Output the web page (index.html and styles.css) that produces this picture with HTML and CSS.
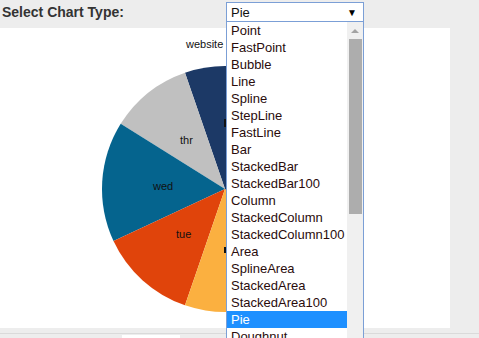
FILE: index.html
```html
<!DOCTYPE html>
<html lang="en">
<head>
  <meta charset="UTF-8">
  <title>Chart Types</title>
  <link rel="stylesheet" href="styles.css">
</head>
<body>
  <!-- TOOLBAR -->
  <div class="toolbar">
    <label class="toolbar-label">Select Chart Type:</label>
    <div class="select-box">
      <span>Pie</span>
      <span class="select-arrow">&#9660;</span>
    </div>
  </div>

  <!-- CHART -->
  <div class="chart-area">
    <svg class="pie" width="450" height="300" viewBox="0 0 450 300">
      <path d="M225,161 L225,38 A123,123 0 0 0 185,44.7 Z" fill="#1c3966"/>
      <path d="M225,161 L185,44.7 A123,123 0 0 0 120.7,95.8 Z" fill="#c0c0c0"/>
      <path d="M225,161 L120.7,95.8 A123,123 0 0 0 113.5,213 Z" fill="#05648e"/>
      <path d="M225,161 L113.5,213 A123,123 0 0 0 185,277.3 Z" fill="#e0440b"/>
      <path d="M225,161 L185,277.3 A123,123 0 0 0 331.5,222.5 Z" fill="#fbb040"/>
      <path d="M225,161 L331.5,222.5 A123,123 0 0 0 225,38 Z" fill="#1c3966"/>
      <g class="pie-label">
        <text x="186" y="20">website</text>
        <text x="180" y="116">thr</text>
        <text x="153" y="162">wed</text>
        <text x="176" y="210">tue</text>
      </g>
      <!-- labels mostly hidden under the open list -->
      <rect x="224" y="91" width="2" height="8" fill="#111"/>
      <rect x="224" y="219" width="2" height="6" fill="#111"/>
    </svg>
  </div>

  <!-- FOOTER -->
  <div class="footer">
    <div class="footer-tab"></div>
  </div>

  <!-- DROPDOWN -->
  <div class="dropdown">
    <ul class="dropdown-list">
      <li>Point</li>
      <li>FastPoint</li>
      <li>Bubble</li>
      <li>Line</li>
      <li>Spline</li>
      <li>StepLine</li>
      <li>FastLine</li>
      <li>Bar</li>
      <li>StackedBar</li>
      <li>StackedBar100</li>
      <li>Column</li>
      <li>StackedColumn</li>
      <li>StackedColumn100</li>
      <li>Area</li>
      <li>SplineArea</li>
      <li>StackedArea</li>
      <li>StackedArea100</li>
      <li class="selected">Pie</li>
      <li>Doughnut</li>
    </ul>
    <div class="scrollbar">
      <div class="scroll-up"></div>
      <div class="scroll-thumb"></div>
    </div>
  </div>
</body>
</html>
```
FILE: styles.css
```css
/* === PAGE === */
body {
  margin: 0;
  background: #ededed;
  font-family: "Liberation Sans", Arial, sans-serif;
  overflow: hidden;
}

/* === TOOLBAR === */
.toolbar {
  display: flex;
  align-items: flex-start;
  height: 28px;
}

.toolbar-label {
  width: 224px;
  padding: 4px 0 0 2px;
  font-size: 14px;
  font-weight: bold;
  color: #333;
}

.select-box {
  box-sizing: border-box;
  display: flex;
  justify-content: space-between;
  align-items: center;
  width: 138px;
  height: 20px;
  margin-top: 2px;
  padding: 0 6px 0 4px;
  border: 1px solid #7b9fd6;
  background: white;
  font-size: 13px;
  color: #111;
}

.select-arrow {
  font-size: 10px;
  color: #000;
}

/* === CHART === */
.chart-area {
  width: 450px;
  height: 300px;
  background: white;
}

.pie {
  display: block;
}

.pie-label {
  font-family: "Liberation Sans", Arial, sans-serif;
  font-size: 11px;
  fill: #111;
}

/* === FOOTER === */
.footer {
  margin-top: 5px;
  border-top: 1px solid #dadada;
  height: 10px;
}

.footer-tab {
  width: 58px;
  height: 10px;
  margin: 1px 0 0 122px;
  background: white;
}

/* === DROPDOWN === */
.dropdown {
  position: absolute;
  top: 21px;
  left: 226px;
  box-sizing: border-box;
  width: 138px;
  height: 317px;
  display: flex;
  border: 1px solid #7b9fd6;
  border-bottom: none;
  background: white;
}

.dropdown-list {
  list-style: none;
  margin: 0;
  padding: 0;
  width: 120px;
  overflow: hidden;
}

.dropdown-list li {
  height: 17px;
  line-height: 17px;
  padding-left: 4px;
  font-size: 13px;
  color: #2a0c0c;
  white-space: nowrap;
  overflow: hidden;
}

.dropdown-list li.selected {
  background: #1e90ff;
  color: white;
}

.scrollbar {
  width: 16px;
  background: #f0f0f0;
}

.scroll-up {
  height: 17px;
  position: relative;
}

.scroll-up::after {
  content: "";
  position: absolute;
  left: 4px;
  top: 7px;
  border-left: 4px solid transparent;
  border-right: 4px solid transparent;
  border-bottom: 4px solid #a3a3a3;
}

.scroll-thumb {
  width: 13px;
  height: 175px;
  margin-left: 2px;
  background: #adadad;
}
```
